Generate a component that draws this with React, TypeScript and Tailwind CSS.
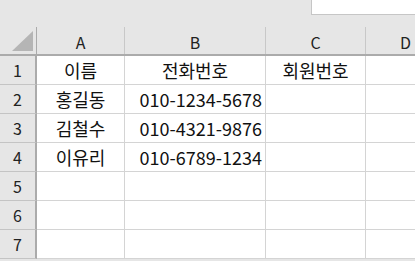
const font = { fontFamily: '"Noto Sans CJK KR", "Noto Sans", sans-serif' };

const cols = [
  { key: "A", w: "w-[88px]" },
  { key: "B", w: "w-[141px]" },
  { key: "C", w: "w-[100px]" },
  { key: "D", w: "w-[80px]" },
];

const rows: (string | null)[][] = [
  ["이름", "전화번호", "회원번호"],
  ["홍길동", "010-1234-5678", null],
  ["김철수", "010-4321-9876", null],
  ["이유리", "010-6789-1234", null],
  [null, null, null],
  [null, null, null],
  [null, null, null],
];

export default function App() {
  return (
    <div className="w-[415px] h-[261px] overflow-hidden bg-[#e6e6e6] text-[#111]" style={font}>
      {/* formula bar strip */}
      <div className="h-[27px] flex justify-end">
        <div className="w-[104px] h-[15px] bg-white border-l border-b border-[#c6c6c6]" />
      </div>

      {/* column headers */}
      <div className="flex h-[29px] border-b-2 border-[#ababab]">
        <div className="w-[37px] shrink-0 border-r border-[#ababab] flex items-end justify-end pr-[3px] pb-[3px]">
          <div
            className="w-[21px] h-[20px] bg-[#b5b5b5]"
            style={{ clipPath: "polygon(100% 0, 100% 100%, 0 100%)" }}
          />
        </div>
        {cols.map((c) => (
          <div
            key={c.key}
            className={`${c.w} shrink-0 border-r border-[#c8c8c8] flex items-center justify-center text-[16px] text-[#222] pt-[2px]`}
          >
            {c.key}
          </div>
        ))}
      </div>

      {rows.map((r, i) => (
        <div key={i} className="flex h-[29px]">
          <div className="w-[37px] shrink-0 border-r-2 border-b border-r-[#ababab] border-b-[#c4c4c4] flex items-center justify-center text-[16px] text-[#222]">
            {i + 1}
          </div>
          <div className="w-[88px] shrink-0 bg-white border-r border-b border-[#d4d4d4] flex items-center justify-center text-[18px]">
            {r[0]}
          </div>
          <div
            className={`w-[141px] shrink-0 bg-white border-r border-b border-[#d4d4d4] flex items-center text-[18px] ${
              i === 0 ? "justify-center" : "justify-end pr-[3px]"
            }`}
          >
            {r[1]}
          </div>
          <div className="w-[100px] shrink-0 bg-white border-r border-b border-[#d4d4d4] flex items-center justify-center text-[18px]">
            {r[2]}
          </div>
          <div className="w-[80px] shrink-0 bg-white border-r border-b border-[#d4d4d4]" />
        </div>
      ))}
    </div>
  );
}
